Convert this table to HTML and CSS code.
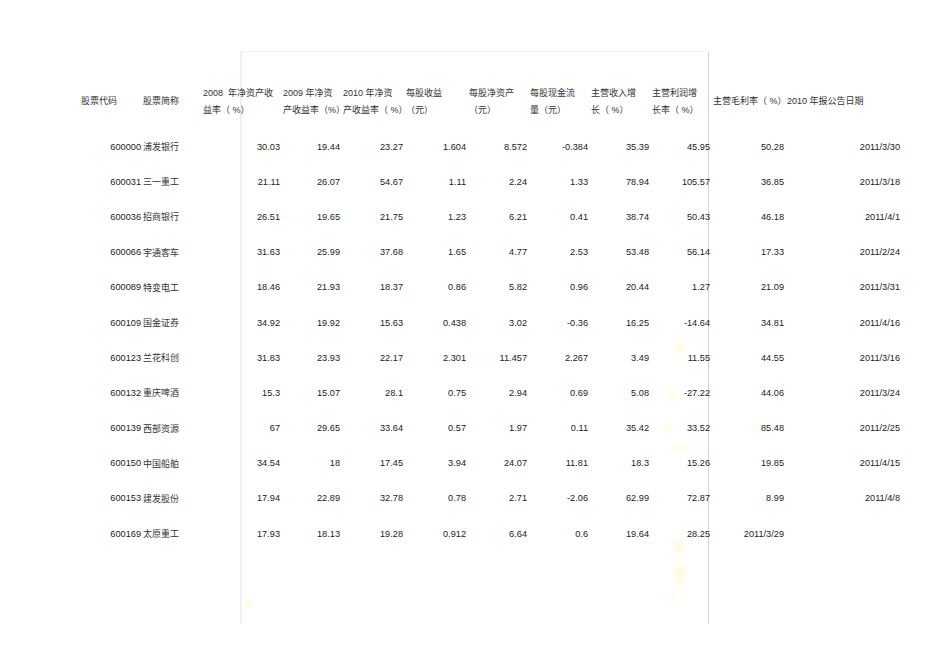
FILE: index.html
```html
<!DOCTYPE html>
<html lang="zh-CN">
<head>
<meta charset="utf-8">
<title>2010 年报</title>
<link rel="stylesheet" href="styles.css">
</head>
<body>
<div class="page">
  <div class="frame"></div>
  <div class="spots">
    <span class="spot s1"></span>
    <span class="spot s2"></span>
    <span class="spot s3"></span>
    <span class="spot s4"></span>
    <span class="spot s5"></span>
    <span class="spot s6"></span>
    <span class="spot s7"></span>
    <span class="spot s8"></span>
  </div>
  <div class="sheet">
    <div class="row head">
      <div class="c l">股票代码</div>
      <div class="c l">股票简称</div>
      <div class="c l">2008&nbsp; 年净资产收<br>益率（ %）</div>
      <div class="c l">2009 年净资<br>产收益率（%）</div>
      <div class="c l">2010 年净资<br>产收益率（ %）</div>
      <div class="c l">每股收益<br>（元）</div>
      <div class="c l">每股净资产<br>（元）</div>
      <div class="c l">每股现金流<br>量（元）</div>
      <div class="c l">主营收入增<br>长（ %）</div>
      <div class="c l">主营利润增<br>长率（ %）</div>
      <div class="c l">主营毛利率（ %）</div>
      <div class="c l">2010 年报公告日期</div>
    </div>

    <div class="row"><div class="c r">600000</div><div class="c l">浦发银行</div><div class="c r">30.03</div><div class="c r">19.44</div><div class="c r">23.27</div><div class="c r">1.604</div><div class="c r">8.572</div><div class="c r">-0.384</div><div class="c r">35.39</div><div class="c r">45.95</div><div class="c r">50.28</div><div class="c r">2011/3/30</div></div>
    <div class="row"><div class="c r">600031</div><div class="c l">三一重工</div><div class="c r">21.11</div><div class="c r">26.07</div><div class="c r">54.67</div><div class="c r">1.11</div><div class="c r">2.24</div><div class="c r">1.33</div><div class="c r">78.94</div><div class="c r">105.57</div><div class="c r">36.85</div><div class="c r">2011/3/18</div></div>
    <div class="row"><div class="c r">600036</div><div class="c l">招商银行</div><div class="c r">26.51</div><div class="c r">19.65</div><div class="c r">21.75</div><div class="c r">1.23</div><div class="c r">6.21</div><div class="c r">0.41</div><div class="c r">38.74</div><div class="c r">50.43</div><div class="c r">46.18</div><div class="c r">2011/4/1</div></div>
    <div class="row"><div class="c r">600066</div><div class="c l">宇通客车</div><div class="c r">31.63</div><div class="c r">25.99</div><div class="c r">37.68</div><div class="c r">1.65</div><div class="c r">4.77</div><div class="c r">2.53</div><div class="c r">53.48</div><div class="c r">56.14</div><div class="c r">17.33</div><div class="c r">2011/2/24</div></div>
    <div class="row"><div class="c r">600089</div><div class="c l">特变电工</div><div class="c r">18.46</div><div class="c r">21.93</div><div class="c r">18.37</div><div class="c r">0.86</div><div class="c r">5.82</div><div class="c r">0.96</div><div class="c r">20.44</div><div class="c r">1.27</div><div class="c r">21.09</div><div class="c r">2011/3/31</div></div>
    <div class="row"><div class="c r">600109</div><div class="c l">国金证券</div><div class="c r">34.92</div><div class="c r">19.92</div><div class="c r">15.63</div><div class="c r">0.438</div><div class="c r">3.02</div><div class="c r">-0.36</div><div class="c r">16.25</div><div class="c r">-14.64</div><div class="c r">34.81</div><div class="c r">2011/4/16</div></div>
    <div class="row"><div class="c r">600123</div><div class="c l">兰花科创</div><div class="c r">31.83</div><div class="c r">23.93</div><div class="c r">22.17</div><div class="c r">2.301</div><div class="c r">11.457</div><div class="c r">2.267</div><div class="c r">3.49</div><div class="c r">11.55</div><div class="c r">44.55</div><div class="c r">2011/3/16</div></div>
    <div class="row"><div class="c r">600132</div><div class="c l">重庆啤酒</div><div class="c r">15.3</div><div class="c r">15.07</div><div class="c r">28.1</div><div class="c r">0.75</div><div class="c r">2.94</div><div class="c r">0.69</div><div class="c r">5.08</div><div class="c r">-27.22</div><div class="c r">44.06</div><div class="c r">2011/3/24</div></div>
    <div class="row"><div class="c r">600139</div><div class="c l">西部资源</div><div class="c r">67</div><div class="c r">29.65</div><div class="c r">33.64</div><div class="c r">0.57</div><div class="c r">1.97</div><div class="c r">0.11</div><div class="c r">35.42</div><div class="c r">33.52</div><div class="c r">85.48</div><div class="c r">2011/2/25</div></div>
    <div class="row"><div class="c r">600150</div><div class="c l">中国船舶</div><div class="c r">34.54</div><div class="c r">18</div><div class="c r">17.45</div><div class="c r">3.94</div><div class="c r">24.07</div><div class="c r">11.81</div><div class="c r">18.3</div><div class="c r">15.26</div><div class="c r">19.85</div><div class="c r">2011/4/15</div></div>
    <div class="row"><div class="c r">600153</div><div class="c l">建发股份</div><div class="c r">17.94</div><div class="c r">22.89</div><div class="c r">32.78</div><div class="c r">0.78</div><div class="c r">2.71</div><div class="c r">-2.06</div><div class="c r">62.99</div><div class="c r">72.87</div><div class="c r">8.99</div><div class="c r">2011/4/8</div></div>
    <div class="row"><div class="c r">600169</div><div class="c l">太原重工</div><div class="c r">17.93</div><div class="c r">18.13</div><div class="c r">19.28</div><div class="c r">0.912</div><div class="c r">6.64</div><div class="c r">0.6</div><div class="c r">19.64</div><div class="c r">28.25</div><div class="c r">2011/3/29</div><div class="c r"></div></div>
  </div>
</div>
</body>
</html>
```
FILE: styles.css
```css
html, body {
  margin: 0;
  padding: 0;
  background: #ffffff;
}

.page {
  position: relative;
  width: 950px;
  height: 672px;
  overflow: hidden;
  font-family: "Liberation Sans", "Noto Sans CJK SC", sans-serif;
  font-size: 9px;
  color: #222222;
}

.frame {
  position: absolute;
  left: 240px;
  top: 51px;
  width: 466px;
  height: 572px;
  border-left: 2px solid #f0f0f0;
  border-top: 1px solid #f2f2f2;
  border-right: 1px solid #d4d4d4;
  pointer-events: none;
}

.spots {
  position: absolute;
  inset: 0;
  pointer-events: none;
}

.spot {
  position: absolute;
  border-radius: 50%;
  background: #fffbe2;
  filter: blur(2px);
}

.s1 { left: 674px; top: 341px; width: 10px; height: 13px; }
.s2 { left: 668px; top: 392px; width: 8px; height: 10px; }
.s3 { left: 664px; top: 424px; width: 7px; height: 8px; }
.s4 { left: 676px; top: 444px; width: 8px; height: 7px; }
.s5 { left: 673px; top: 540px; width: 11px; height: 14px; }
.s6 { left: 673px; top: 564px; width: 14px; height: 22px; }
.s7 { left: 669px; top: 594px; width: 7px; height: 6px; }
.s8 { left: 244px; top: 598px; width: 8px; height: 9px; }

.sheet {
  position: relative;
  padding: 84px 0 0 81px;
  display: flex;
  flex-direction: column;
}

.row {
  display: grid;
  grid-template-columns: 61px 61px 80px 60px 63px 63px 61px 61px 61px 61px 74px 113px;
  height: 35.2px;
  align-items: center;
}

.row.head {
  height: 35px;
  margin-bottom: 10px;
  line-height: 17px;
  color: #333333;
}

.c {
  white-space: nowrap;
}

.l {
  text-align: left;
}

.r {
  text-align: right;
  padding-right: 3px;
  font-size: 9.2px;
}

.row .c:first-child.r {
  padding-right: 1px;
}

.row .c:nth-child(2) {
  padding-left: 1px;
  color: #333333;
}

.row .c:last-child.r {
  padding-right: 0;
}
```
